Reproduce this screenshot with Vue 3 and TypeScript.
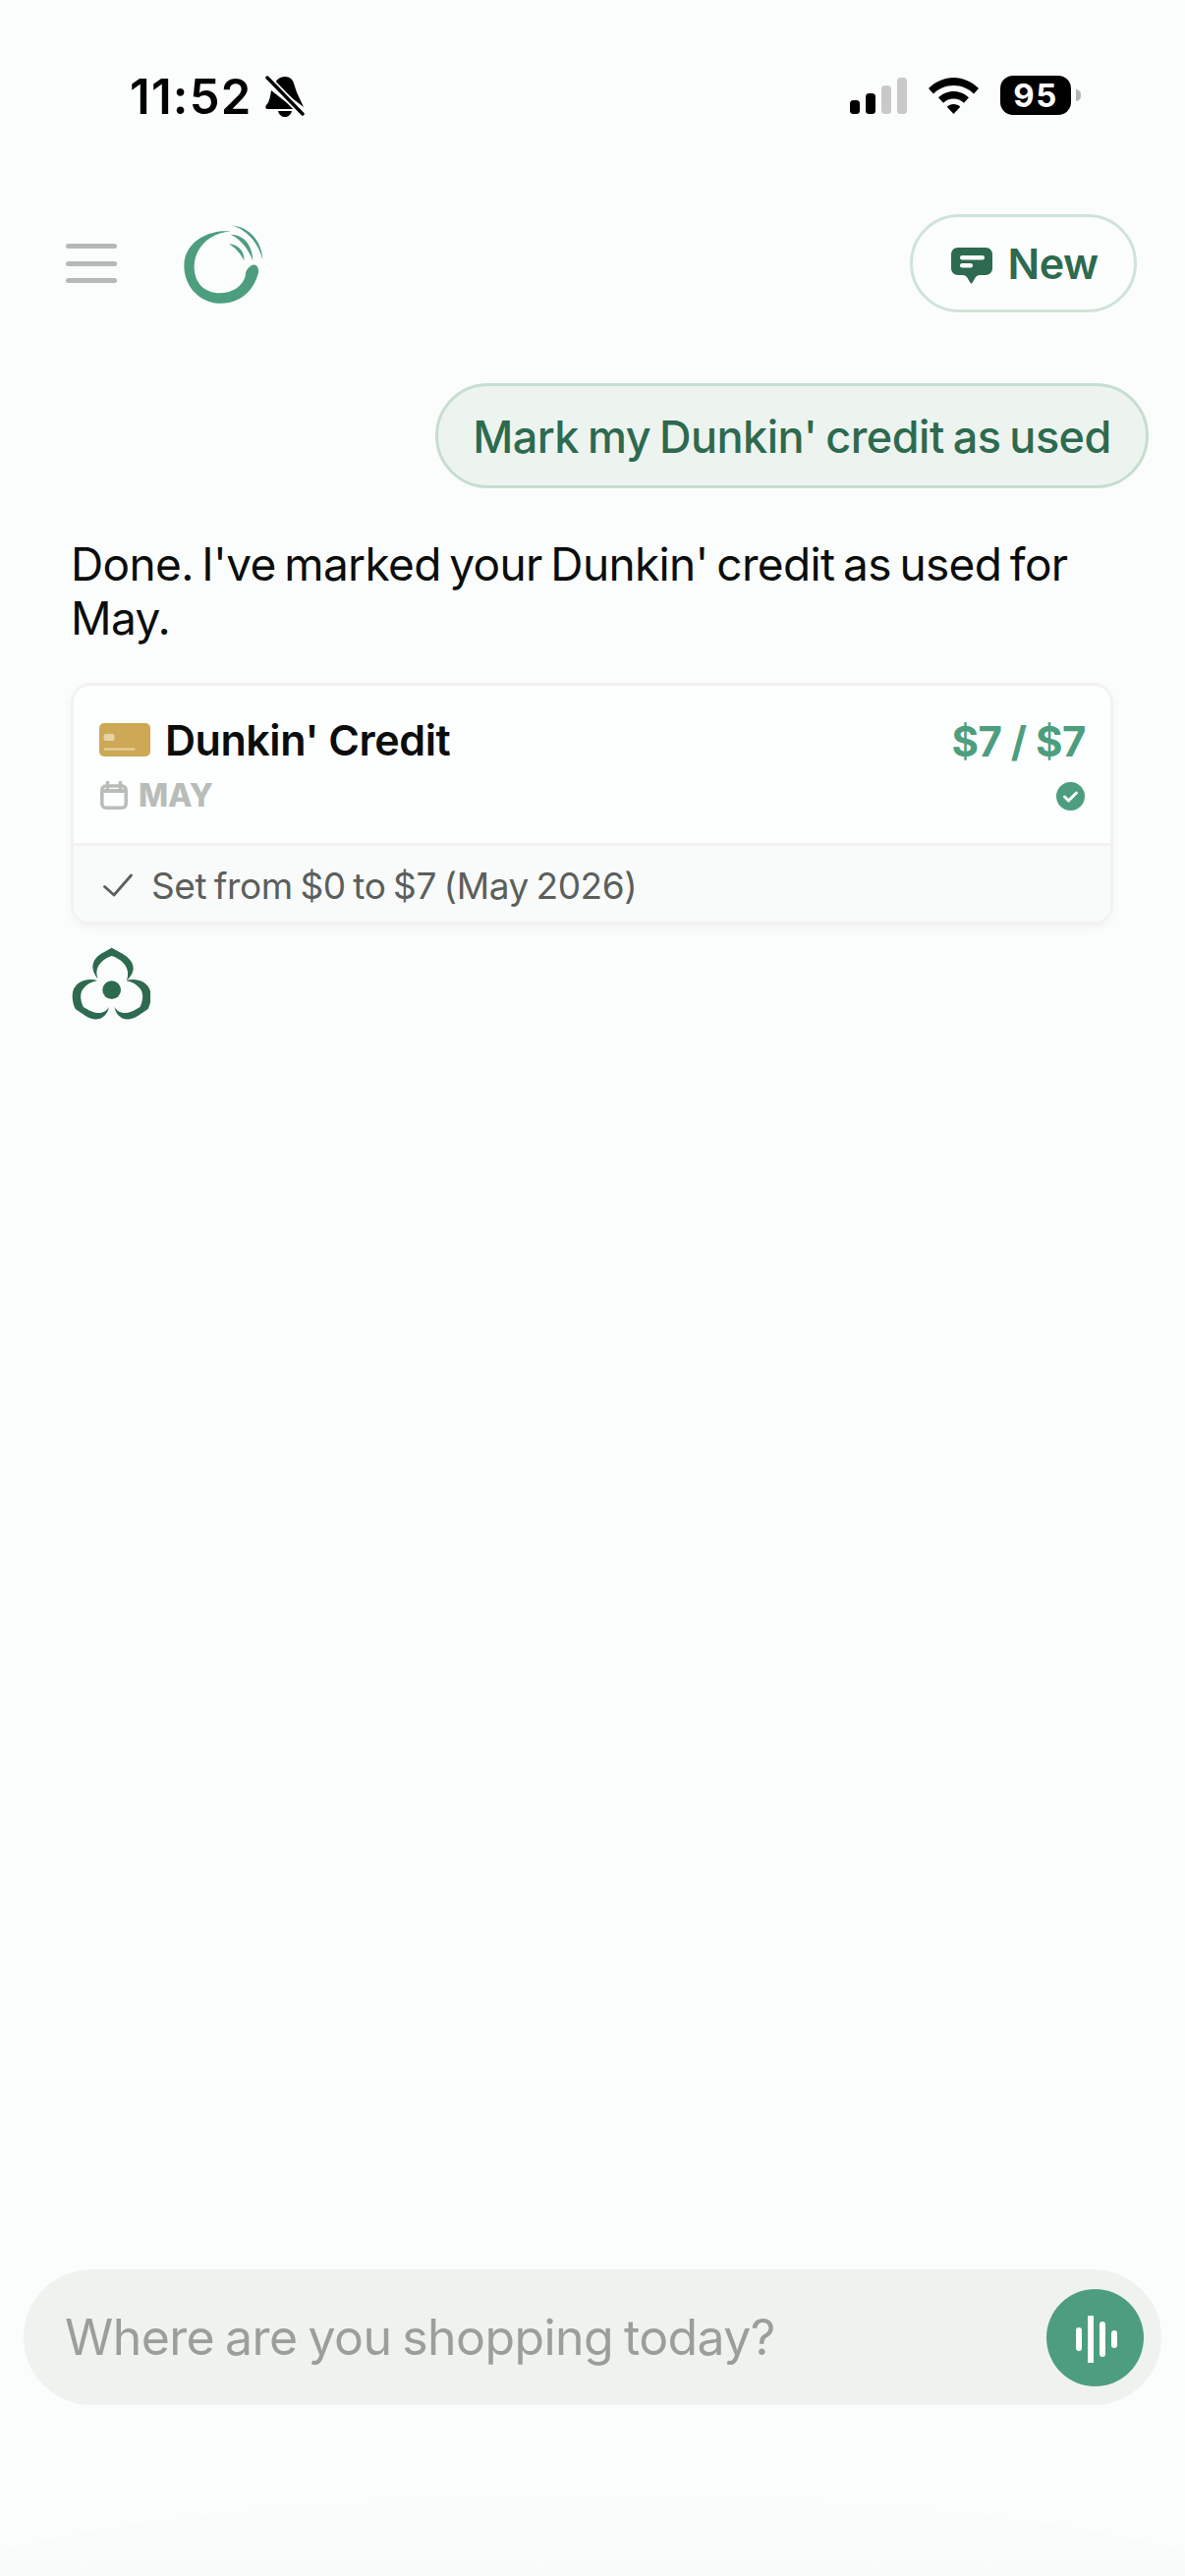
<script setup lang="ts">
const bars: { x: number; y: number; on: boolean }[] = [
  { x: 0, y: 23, on: true },
  { x: 16, y: 16, on: true },
  { x: 32, y: 8, on: false },
  { x: 48, y: 0, on: false },
]
</script>

<template>
  <div class="page">
    <div class="corner-glow"></div>
    <header class="status">
      <div class="status-left">
        <span class="time">11:52</span>
        <svg class="bell" width="40" height="44" viewBox="0 0 40 44">
          <path d="M20 1c5 0 8 3 9 7 1 3 2 6 3 9l7 15-30-23c2-4 5-8 11-8zM6 15l24 19H2c-2 0-2-3-1-4 3-3 4-8 5-15zM13 36h14c-1 4-4 6-7 6s-6-2-7-6z" fill="#000"/>
          <path d="M2 2l36 37" stroke="#fbfdfc" stroke-width="7"/>
          <path d="M2 2l36 37" stroke="#000" stroke-width="3.4" stroke-linecap="round"/>
        </svg>
      </div>
      <div class="status-right">
        <svg class="signal" width="58" height="37" viewBox="0 0 58 37">
          <rect v-for="b in bars" :key="b.x" :x="b.x" :y="b.y" width="10" :height="37 - b.y" rx="3.5" :fill="b.on ? '#000' : '#c8c9c8'"/>
        </svg>
        <svg class="wifi" width="51" height="37" viewBox="0 0 51 37">
          <path d="M25.500 0C35 0 44 4 51 11l-5 5.500C40.500 11 33.500 8 25.500 8S10.500 11 5 16.500L0 11C7 4 16 0 25.500 0z" fill="#000"/>
          <path d="M25.500 14c6 0 11.500 2.300 15.500 6.300l-5 5.400c-2.800-2.700-6.500-4.200-10.500-4.200s-7.700 1.500-10.500 4.200L10 20.300C14 16.300 19.500 14 25.500 14z" fill="#000"/>
          <path d="M25.500 27c2.700 0 5 1 6.800 2.700L25.500 37l-6.800-7.300C20.500 28 22.800 27 25.500 27z" fill="#000"/>
        </svg>
        <div class="battery">
          <div class="battery-body"><span>95</span></div>
          <div class="battery-tip"></div>
        </div>
      </div>
    </header>

    <nav class="topbar">
      <div class="nav-left">
        <div class="burger"><i></i><i></i><i></i></div>
        <svg class="logo" width="90" height="87" viewBox="430 80 270 260">
          <path fill="#4d9e7e" d="M585 108C520 100 443 140 443 212c0 68 52 116 112 116 60 0 100-38 115-93 2-15-5-27-15-25-17 5-25 20-25 35-10 33-42 51-79 51-46 0-77-31-77-81 0-55 46-103 111-107z"/>
          <path fill="#4d9e7e" d="M590 90c50 5 90 45 93 105-11-45-43-90-93-105z"/>
          <path fill="#4d9e7e" d="M585 118c40 0 67 32 68 80-13-33-33-63-68-80z"/>
          <path fill="#4d9e7e" d="M580 146c30 2 48 24 46 51-11-22-26-39-46-51z"/>
        </svg>
      </div>
      <button class="new-btn" type="button">
        <svg width="44" height="38" viewBox="0 0 44 38">
          <path fill="#2d6a4f" d="M8 1h28c4 0 7 3 7 7v14c0 4-3 7-7 7h-6c-2 0-3 1-4 2l-3 5c-1 2-2 2-3 0l-3-5c-1-1-2-2-4-2H8c-4 0-7-3-7-7V8c0-4 3-7 7-7z"/>
          <rect x="10" y="9" width="25" height="4.500" rx="2.200" fill="#fbfdfc"/>
          <rect x="10" y="17" width="13" height="4.500" rx="2.200" fill="#fbfdfc"/>
        </svg>
        <span>New</span>
      </button>
    </nav>

    <main class="chat">
      <div class="bubble-row">
        <div class="bubble">Mark my Dunkin' credit as used</div>
      </div>
      <p class="reply">Done. I've marked your Dunkin' credit as used for May.</p>

      <section class="card">
        <div class="card-main">
          <div class="card-info">
            <div class="card-title">
              <svg width="52" height="34" viewBox="0 0 52 34">
                <rect width="52" height="34" rx="5" fill="#cda955"/>
                <rect x="4.500" y="11" width="11" height="7" rx="2" fill="#e6d3a6"/>
                <rect x="4.500" y="25.500" width="32" height="2" rx="1" fill="#e6d3a6"/>
              </svg>
              <span>Dunkin' Credit</span>
            </div>
            <div class="card-period">
              <svg width="28" height="29" viewBox="0 0 28 29" fill="none" stroke="#b8bdb8" stroke-width="3.500">
                <rect x="1.800" y="5" width="24.400" height="22.200" rx="4"/>
                <path d="M1.800 10h24.400" stroke-width="4"/>
                <path d="M7.500 1v6M20.500 1v6" stroke-linecap="round"/>
              </svg>
              <span>MAY</span>
            </div>
          </div>
          <div class="card-amount">
            <span class="amount">$7 / $7</span>
            <svg width="29" height="29" viewBox="0 0 29 29">
              <circle cx="14.500" cy="14.500" r="14.500" fill="#4d9e7e"/>
              <path d="M8.500 15l4 4 8-8" fill="none" stroke="#fff" stroke-width="3" stroke-linecap="round" stroke-linejoin="round"/>
            </svg>
          </div>
        </div>
        <div class="card-foot">
          <svg width="30" height="24" viewBox="0 0 30 24" fill="none" stroke="#5b5f5c" stroke-width="2.800" stroke-linecap="round" stroke-linejoin="round">
            <path d="M1.500 13.500L11 22 28.500 2"/>
          </svg>
          <span>Set from $0 to $7 (May 2026)</span>
        </div>
      </section>

      <svg class="spinner" width="80" height="78" viewBox="70 65 240 234">
        <circle cx="192" cy="199" r="28" fill="#2d6a4f"/>
        <path fill="#2d6a4f" d="M150 165C130 140 125 110 160 88L192 70 225 88C262 110 270 140 238 170 250 135 230 108 192 95 155 108 138 135 150 165Z"/>
        <path fill="#2d6a4f" d="M148 170C115 160 70 175 72 220 73 240 78 252 82 258L112 278C145 300 178 285 184 250 172 272 145 278 105 250 94 225 95 205 108 192 118 180 130 175 148 170Z"/>
        <path fill="#2d6a4f" d="M236 170C269 160 314 175 312 220 311 240 306 252 302 258L272 278C239 300 206 285 200 250 212 272 239 278 279 250 290 225 289 205 276 192 266 180 254 175 236 170Z"/>
      </svg>
    </main>

    <footer class="composer">
      <span class="placeholder">Where are you shopping today?</span>
      <button class="mic" type="button" aria-label="Voice">
        <svg width="42" height="48" viewBox="0 0 42 48" fill="#fff">
          <rect x="0" y="12" width="6" height="24" rx="3"/>
          <rect x="12" y="0" width="6" height="48"/>
          <rect x="24" y="6" width="6" height="36" rx="3"/>
          <rect x="36" y="15" width="6" height="18" rx="3"/>
        </svg>
      </button>
    </footer>
  </div>
</template>

<style>
html, body { margin: 0; background: #fbfdfc; }
</style>

<style scoped>
.page {
  position: relative;
  width: 1206px;
  height: 2622px;
  overflow: hidden;
  background: #fbfdfc;
  display: flex;
  flex-direction: column;
  font-family: Inter, "Noto Sans", sans-serif;
  color: #0b0d0c;
}
.corner-glow {
  position: absolute;
  left: -60px;
  right: -60px;
  bottom: -110px;
  height: 190px;
  border-radius: 50%;
  background: linear-gradient(#fafcfb, #f8faf9);
}
.status {
  height: 77px;
  margin-top: 77px;
  padding: 0 106px 0 132px;
  display: flex;
  justify-content: space-between;
  align-items: flex-start;
}
.status-left { display: flex; align-items: center; gap: 14px; height: 44px; }
.time { font-size: 49px; font-weight: 600; line-height: 44px; letter-spacing: 1.200px; color: #000; }
.bell { display: block; }
.status-right { display: flex; align-items: flex-start; }
.signal { margin: 2px 22px 0 0; display: block; }
.wifi { margin: 2px 22px 0 0; display: block; }
.battery { display: flex; align-items: center; height: 40px; }
.battery-body {
  width: 72px; height: 40px; border-radius: 13px; background: #000; color: #fff;
  display: flex; align-items: center; justify-content: center;
  font-size: 33px; font-weight: 700; letter-spacing: 1.500px;
}
.battery-tip {
  width: 5px; height: 12px; margin-left: 5px; background: #b5b6b5;
  border-radius: 0 6px 6px 0;
}
.topbar {
  height: 100px;
  margin-top: 64px;
  padding: 0 49px 0 67px;
  display: flex;
  justify-content: space-between;
  align-items: center;
}
.nav-left { display: flex; align-items: center; gap: 64px; }
.burger { width: 52px; display: flex; flex-direction: column; gap: 12.500px; }
.burger i { display: block; height: 5px; border-radius: 3px; background: #b4b9b5; }
.logo { display: block; margin-top: 2px; }
.new-btn {
  width: 231px; height: 100px; border: 3px solid #d0e3d8; border-radius: 50px;
  background: #fcfefd; display: flex; align-items: center; justify-content: center; gap: 14px;
  font: 600 43px Inter, "Noto Sans", sans-serif; color: #2d6a4f; padding: 0 0 0 2px; letter-spacing: -0.5px;
}
.new-btn svg { display: block; margin-top: 4px; }
.chat { padding: 72px 37px 0 72px; display: flex; flex-direction: column; }
.bubble-row { display: flex; justify-content: flex-end; }
.bubble {
  box-sizing: border-box; height: 107px; width: 726px; border: 3px solid #c6ddcf; border-radius: 54px;
  background: #edf4ef; color: #2d6a4f; font-size: 45px; font-weight: 500; letter-spacing: -0.5px; word-spacing: -2.600px;
  padding-top: 2px;
  display: flex; align-items: center; justify-content: center; white-space: nowrap;
}
.reply {
  margin: 50px 0 0; width: 1040px; font-size: 46px; line-height: 55px; letter-spacing: -0.65px; word-spacing: -3.700px; color: #0b0d0c;
}
.card {
  box-sizing: border-box; margin-top: 38px; width: 1061px; height: 246px;
  border: 3px solid #f2f3f1; border-radius: 20px; background: #fdfefe; overflow: hidden;
  box-shadow: 0 4px 10px rgba(0,0,0,0.04); display: flex; flex-direction: column;
}
.card-main {
  height: 160px; flex: none; padding: 0 26px; display: flex; justify-content: space-between;
}
.card-title { display: flex; align-items: center; gap: 15px; margin-top: 30px; font-size: 43px; font-weight: 600; letter-spacing: -0.45px; height: 50px; }
.card-title svg { display: block; }
.card-period { display: flex; align-items: center; gap: 11px; margin: 12px 0 0 1px; color: #b8bdb8; font-size: 32px; font-weight: 800; letter-spacing: -0.2px; }
.card-period svg { display: block; }
.card-amount { display: flex; flex-direction: column; align-items: flex-end; }
.amount { margin: 32px -1px 0 0; font-size: 42px; font-weight: 700; color: #4d9e7e; height: 50px; line-height: 50px; letter-spacing: -0.5px; }
.card-amount svg { margin-top: 16px; display: block; }
.card-foot {
  flex: 1; border-top: 3px solid #f2f3f1; background: #f9fafa; padding: 3px 30px 0 30px;
  display: flex; align-items: center; gap: 19px; font-size: 37px; color: #5b5f5c; letter-spacing: -0.4px; word-spacing: -2.400px;
}
.spinner { display: block; margin: 22px 0 0 1px; }
.composer {
  position: relative;
  box-sizing: border-box; margin: auto 24px 174px; height: 138px; border-radius: 69px; background: #f0f2f0;
  display: flex; align-items: center; justify-content: space-between; padding: 0 18px 0 42px;
}
.placeholder { font-size: 50px; color: #9a9f9a; letter-spacing: -0.6px; word-spacing: -2.500px; }
.mic {
  width: 99px; height: 99px; border-radius: 50%; border: 0; padding: 3px 0 0 3px; background: #4d9e7e;
  display: flex; align-items: center; justify-content: center;
}
.mic svg { display: block; }
</style>
